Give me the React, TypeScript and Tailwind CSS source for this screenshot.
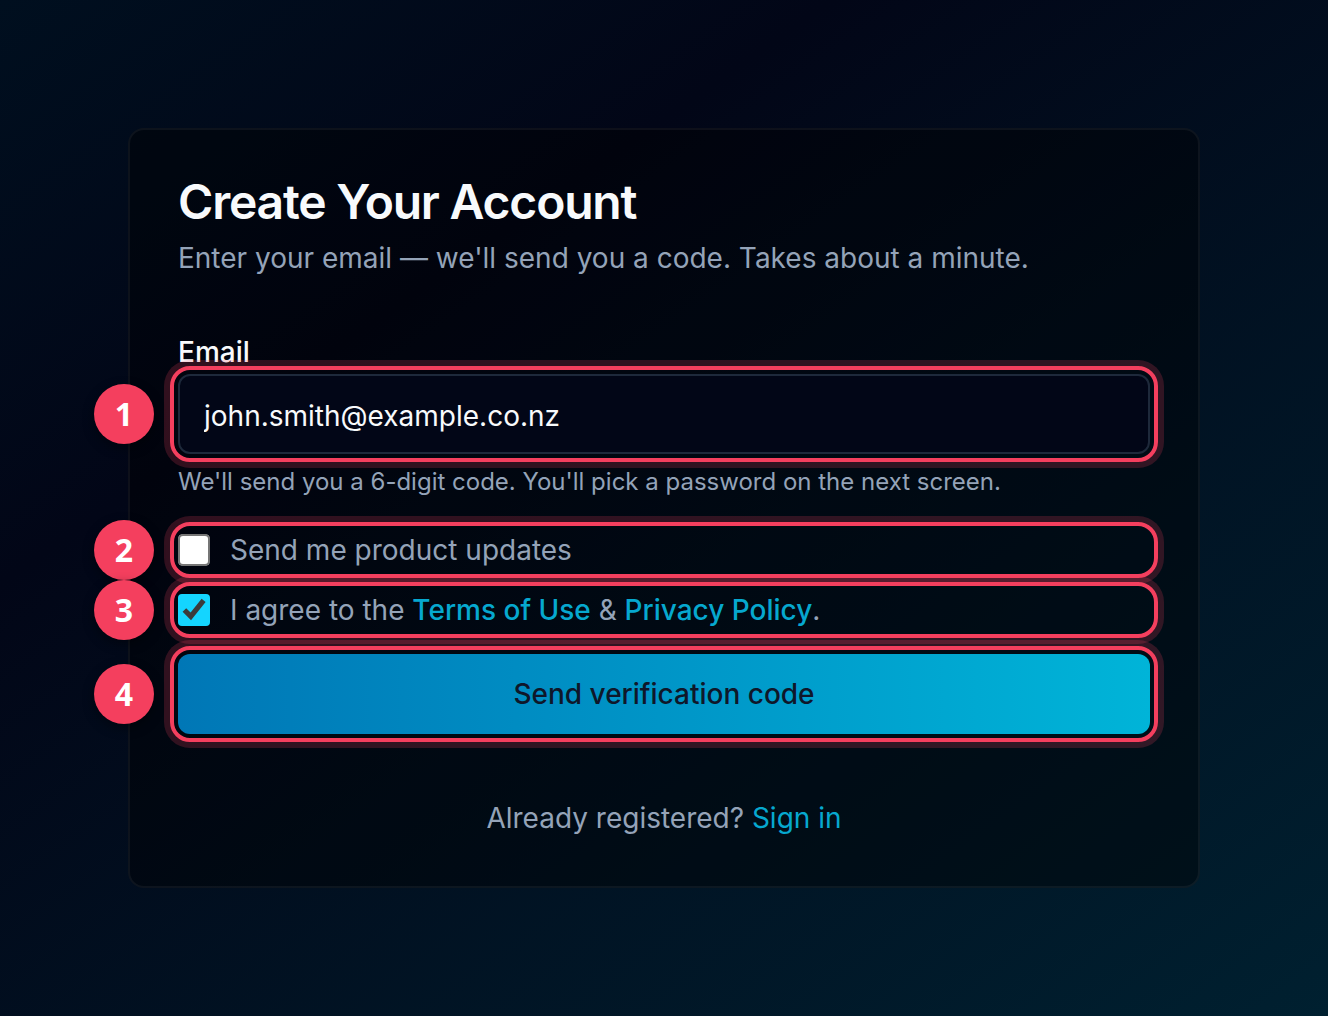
import type { ReactNode } from "react";

type StepProps = {
  step: number;
  className?: string;
  children: ReactNode;
};

function Step({ step, className = "", children }: StepProps) {
  return (
    <div className={`relative ${className}`}>
      {children}
      <span
        aria-hidden="true"
        className="pointer-events-none absolute -inset-2 rounded-[20px] border-4 border-[#f43f5e] shadow-[0_0_0_6px_rgba(244,63,94,0.2)]"
      />
      <span className="pointer-events-none absolute top-1/2 -left-21 flex size-15 -translate-y-1/2 items-center justify-center rounded-full bg-[#f43f5e] font-['Open_Sans',sans-serif] text-[32px] leading-none font-bold text-white shadow-[0_4px_12px_rgba(0,0,0,0.4)]">
        {step}
      </span>
    </div>
  );
}

export default function App() {
  return (
    <main className="flex min-h-screen flex-col justify-center bg-[linear-gradient(145deg,#000f1f_0%,#020617_30%,#002030_100%)] p-32 font-['Inter',sans-serif] text-[28px] leading-10 text-[#94a3b8]">
      <section className="rounded-2xl border-2 border-white/5 bg-black/40 p-12">
        <header className="flex flex-col gap-3">
          <h1 className="text-5xl leading-none font-semibold tracking-tight text-[#f8fafc]">
            Create Your Account
          </h1>
          <p>Enter your email — we'll send you a code. Takes about a minute.</p>
        </header>

        <form className="mt-15" onSubmit={(event) => event.preventDefault()}>
          <label htmlFor="email" className="block leading-7 font-medium text-[#f8fafc]">
            Email
          </label>
          <Step step={1} className="mt-2">
            <input
              id="email"
              type="email"
              defaultValue="john.smith@example.co.nz"
              aria-describedby="email-hint"
              className="block h-20 w-full rounded-xl border-2 border-[#1e293b] bg-[#020617] px-6 pt-1 text-[#f8fafc] outline-none"
            />
          </Step>
          <p id="email-hint" className="mt-3 text-2xl">
            We'll send you a 6-digit code. You'll pick a password on the next screen.
          </p>

          <Step step={2} className="mt-8">
            <label className="flex items-center gap-5">
              <input type="checkbox" className="size-4 accent-[#14d5ff] [zoom:2]" />
              <span>Send me product updates</span>
            </label>
          </Step>
          <Step step={3} className="mt-5">
            <label className="flex items-center gap-5">
              <input type="checkbox" defaultChecked className="size-4 accent-[#14d5ff] [zoom:2]" />
              <span>
                I agree to the{" "}
                <a href="#terms" className="font-medium text-[#06a8cf]">
                  Terms of Use
                </a>{" "}
                &amp;{" "}
                <a href="#privacy" className="font-medium text-[#06a8cf]">
                  Privacy Policy
                </a>
                .
              </span>
            </label>
          </Step>
          <Step step={4} className="mt-6">
            <button
              type="submit"
              className="block h-20 w-full rounded-xl bg-linear-to-r from-[#0077b6] to-[#00b4d8] font-medium text-[#0f172a]"
            >
              Send verification code
            </button>
          </Step>
        </form>

        <p className="mt-16 text-center">
          Already registered?{" "}
          <a href="#sign-in" className="text-[#06a8cf]">
            Sign in
          </a>
        </p>
      </section>
    </main>
  );
}
